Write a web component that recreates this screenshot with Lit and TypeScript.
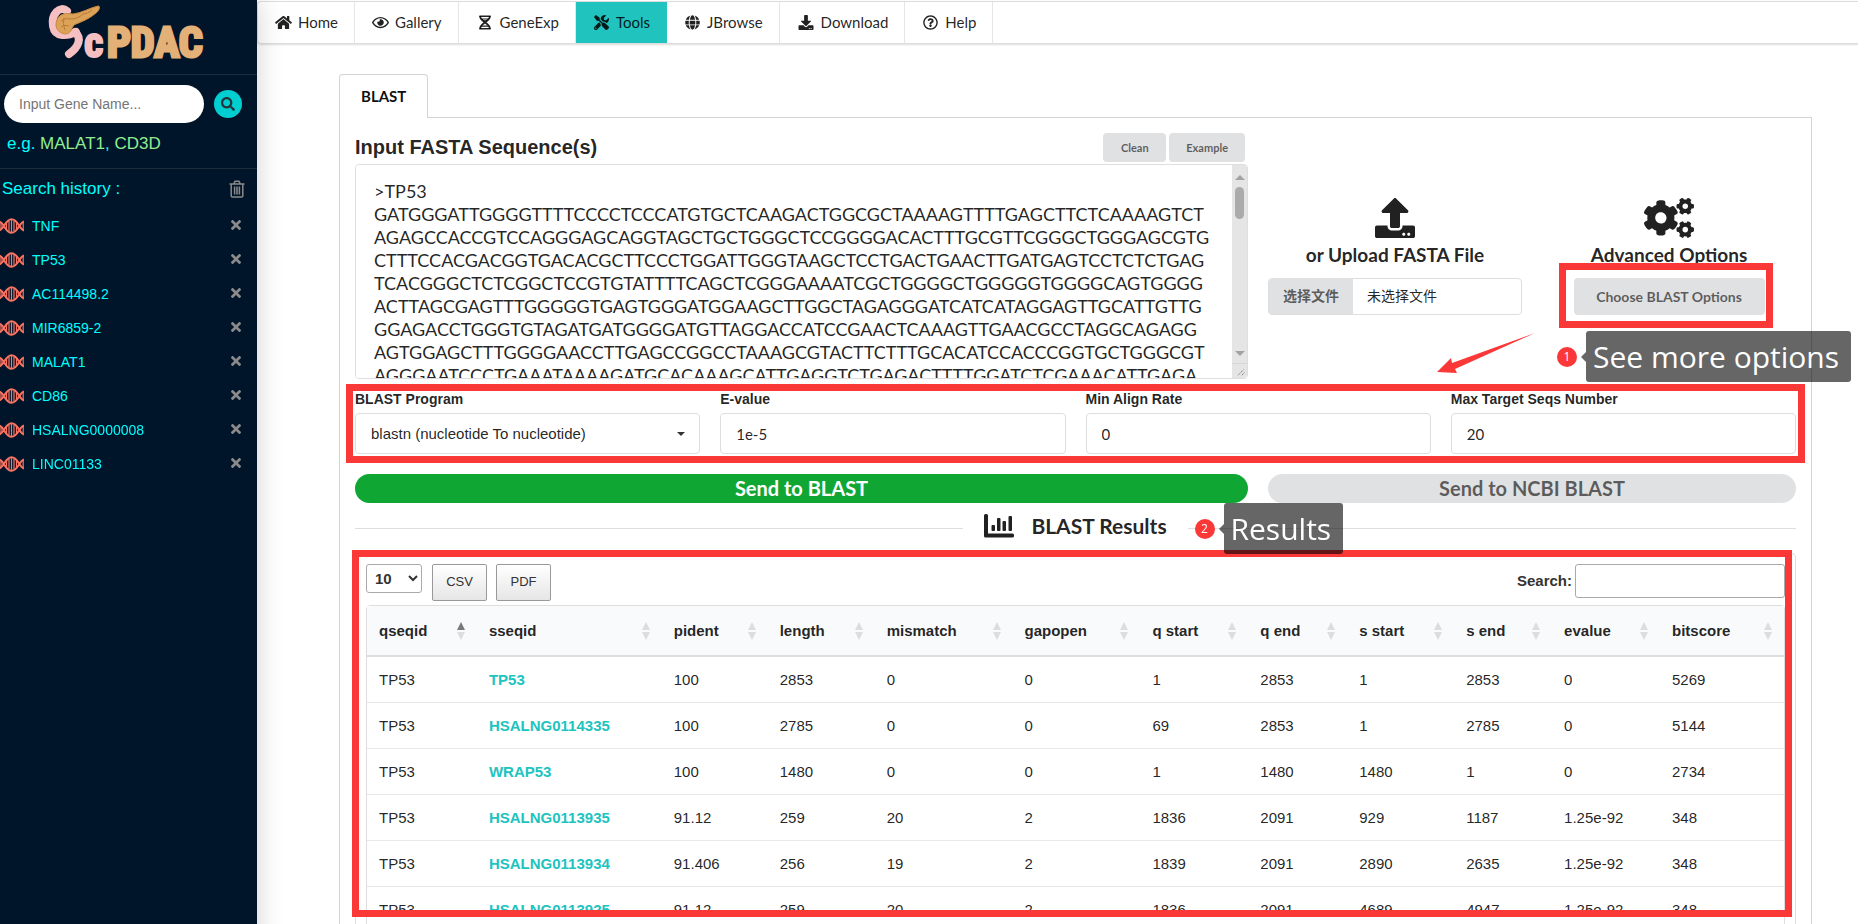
import { LitElement, html, css, svg } from "lit";
import { customElement, property } from "lit/decorators.js";

/* ---------- icons ---------- */
const smallCog =
  "M512.1 191l-8.2 14.3c-3 5.3-9.4 7.5-15.1 5.4-11.8-4.4-22.6-10.7-32.1-18.6-4.6-3.8-5.8-10.5-2.8-15.7l8.2-14.3c-6.9-8-12.3-17.3-15.9-27.4h-16.5c-6 0-11.2-4.3-12.2-10.3-2-12-2.1-24.6 0-37.1 1-6 6.2-10.4 12.2-10.4h16.5c3.6-10.1 9-19.4 15.9-27.4l-8.2-14.3c-3-5.2-1.9-11.9 2.8-15.7 9.5-7.9 20.4-14.2 32.1-18.6 5.7-2.1 12.1.1 15.1 5.4l8.2 14.3c10.5-1.9 21.2-1.9 31.7 0L552 6.3c3-5.3 9.4-7.5 15.1-5.4 11.8 4.4 22.6 10.7 32.1 18.6 4.6 3.8 5.8 10.5 2.8 15.7l-8.2 14.3c6.9 8 12.3 17.3 15.9 27.4h16.5c6 0 11.2 4.3 12.2 10.3 2 12 2.1 24.6 0 37.1-1 6-6.2 10.4-12.2 10.4h-16.5c-3.6 10.1-9 19.4-15.9 27.4l8.2 14.3c3 5.2 1.9 11.9-2.8 15.7-9.5 7.9-20.4 14.2-32.1 18.6-5.7 2.1-12.1-.1-15.1-5.4l-8.2-14.3c-10.4 1.9-21.2 1.9-31.7 0zm-10.5-58.8c38.5 29.6 82.4-14.3 52.8-52.8-38.5-29.7-82.4 14.3-52.8 52.8z";
const bigCog =
  "M386.3 286.1l33.7 16.8c10.1 5.8 14.5 18.1 10.5 29.1-8.9 24.2-26.4 46.4-42.6 65.8-7.4 8.9-20.2 11.1-30.3 5.3l-29.1-16.8c-16 13.7-34.6 24.6-54.9 31.7v33.6c0 11.6-8.3 21.6-19.7 23.6-24.6 4.2-50.4 4.4-75.9 0-11.5-2-20-11.9-20-23.6V418c-20.3-7.2-38.9-18-54.9-31.7L74 403c-10 5.8-22.9 3.6-30.3-5.3-16.2-19.4-33.3-41.6-42.2-65.7-4-10.9.4-23.2 10.5-29.1l33.3-16.8c-3.9-20.9-3.9-42.4 0-63.4L12 205.8c-10.1-5.8-14.6-18.1-10.5-29 8.9-24.2 26-46.4 42.2-65.8 7.4-8.9 20.2-11.1 30.3-5.3l29.1 16.8c16-13.7 34.6-24.6 54.9-31.7V57.1c0-11.5 8.2-21.5 19.6-23.5 24.6-4.2 50.5-4.4 76-.1 11.5 2 20 11.9 20 23.6v33.6c20.3 7.2 38.9 18 54.9 31.7l29.1-16.8c10-5.8 22.9-3.6 30.3 5.3 16.2 19.4 33.2 41.6 42.1 65.8 4 10.9.1 23.2-10 29.1l-33.7 16.8c3.9 21 3.9 42.5 0 63.5zm-117.6 21.1c59.2-77-28.7-164.9-105.7-105.7-59.2 77 28.7 164.9 105.7 105.7z";

const icons: Record<string, { box: string; body: unknown }> = {
  home: {
    box: "0 0 576 512",
    body: svg`<path d="M280.37 148.26L96 300.11V464a16 16 0 0 0 16 16l112.06-.29a16 16 0 0 0 15.92-16V368a16 16 0 0 1 16-16h64a16 16 0 0 1 16 16v95.64a16 16 0 0 0 16 16.05L464 480a16 16 0 0 0 16-16V300L295.67 148.26a12.19 12.19 0 0 0-15.3 0zM571.6 251.47L488 182.56V44.05a12 12 0 0 0-12-12h-56a12 12 0 0 0-12 12v72.61L318.47 43a48 48 0 0 0-61 0L4.34 251.47a12 12 0 0 0-1.6 16.9l25.5 31A12 12 0 0 0 45.15 301l235.22-193.74a12.19 12.19 0 0 1 15.3 0L530.9 301a12 12 0 0 0 16.9-1.6l25.5-31a12 12 0 0 0-1.7-16.93z"/>`,
  },
  eye: {
    box: "0 0 576 512",
    body: svg`<path d="M288 144a110.94 110.94 0 0 0-31.24 5 55.4 55.4 0 0 1 7.24 27 56 56 0 0 1-56 56 55.4 55.4 0 0 1-27-7.24A111.71 111.71 0 1 0 288 144zm284.52 97.4C518.29 135.59 410.93 64 288 64S57.68 135.64 3.48 241.41a32.35 32.35 0 0 0 0 29.19C57.71 376.41 165.07 448 288 448s230.32-71.64 284.52-177.41a32.35 32.35 0 0 0 0-29.19zM288 400c-98.65 0-189.09-55-237.93-144C98.91 167 189.34 112 288 112s189.09 55 237.93 144C477.1 345 386.66 400 288 400z"/>`,
  },
  gene: {
    box: "0 0 14 16",
    body: svg`<path d="M2 1V2.500C2 6 12 9.500 12 13.500V15M12 1V2.500C12 6 2 9.500 2 13.500V15" fill="none" stroke="currentColor" stroke-width="2"/><path d="M1 .5h12v1.600H1zM1 13.900h12v1.600H1zM3 3.600h8v1.200H3zM3 11.300h8v1.200H3zM5 5.600h4v1H5z"/>`,
  },
  tools: {
    box: "0 0 512 512",
    body: svg`<path d="M501.1 395.7L384 278.600c-23.1-23.1-57.6-27.6-85.4-13.9L192 158.100V96L64 0 0 64l96 128h62.100l106.600 106.600c-13.6 27.800-9.200 62.300 13.900 85.400l117.100 117.100c14.600 14.600 38.200 14.600 52.700 0l52.700-52.700c14.500-14.600 14.500-38.200 0-52.700zM331.700 225c28.300 0 54.900 11 74.900 31l19.400 19.400c15.800-6.900 30.800-16.500 43.800-29.500 37.100-37.100 49.700-89.300 37.900-136.700-2.200-9-13.500-12.100-20.100-5.500l-74.400 74.400-67.900-11.300L334 98.900l74.400-74.400c6.600-6.600 3.400-17.900-5.700-20.200-47.400-11.700-99.600.9-136.600 37.900-28.500 28.500-41.900 66.100-41.200 103.600l82.100 82.100c8.100-1.900 16.500-2.900 24.700-2.900zm-103.900 82l-56.700-56.700L18.700 402.800c-25 25-25 65.500 0 90.500s65.500 25 90.500 0l123.600-123.600c-7.600-19.900-9.900-41.600-5-62.700zM64 472c-13.200 0-24-10.800-24-24 0-13.300 10.700-24 24-24s24 10.700 24 24c0 13.200-10.700 24-24 24z"/>`,
  },
  globe: {
    box: "0 0 496 512",
    body: svg`<path d="M336.500 160C322 70.700 287.800 8 248 8s-74 62.700-88.500 152h177zM152 256c0 22.200 1.200 43.500 3.300 64h185.300c2.100-20.500 3.300-41.800 3.300-64s-1.200-43.500-3.300-64H155.300c-2.100 20.500-3.300 41.800-3.300 64zm324.700-96c-28.600-67.900-86.500-120.400-158-141.600 24.400 33.800 41.200 84.700 50 141.600h108zM177.200 18.400C105.800 39.600 47.800 92.100 19.300 160h108c8.700-56.900 25.500-107.800 49.900-141.600zM487.400 192H372.700c2.100 21 3.300 42.500 3.300 64s-1.200 43-3.300 64h114.600c5.500-20.500 8.600-41.800 8.600-64s-3.100-43.500-8.500-64zM120 256c0-21.500 1.200-43 3.300-64H8.600C3.200 212.500 0 233.800 0 256s3.200 43.500 8.600 64h114.600c-2-21-3.200-42.500-3.200-64zm39.500 96c14.500 89.300 48.700 152 88.500 152s74-62.700 88.500-152h-177zm159.300 141.600c71.400-21.200 129.400-73.700 158-141.600h-108c-8.800 56.900-25.600 107.800-50 141.600zM19.300 352c28.600 67.900 86.500 120.400 158 141.600-24.400-33.800-41.200-84.700-50-141.600h-108z"/>`,
  },
  download: {
    box: "0 0 512 512",
    body: svg`<path d="M216 0h80c13.300 0 24 10.700 24 24v168h87.700c17.800 0 26.700 21.500 14.100 34.100L269.700 378.300c-7.500 7.500-19.800 7.500-27.300 0L90.100 226.100c-12.600-12.600-3.700-34.100 14.100-34.100H192V24c0-13.300 10.700-24 24-24zm296 376v112c0 13.300-10.700 24-24 24H24c-13.300 0-24-10.700-24-24V376c0-13.300 10.700-24 24-24h146.700l49 49c20.100 20.100 52.500 20.100 72.600 0l49-49H488c13.300 0 24 10.700 24 24zm-124 88c0-11-9-20-20-20s-20 9-20 20 9 20 20 20 20-9 20-20zm64 0c0-11-9-20-20-20s-20 9-20 20 9 20 20 20 20-9 20-20z"/>`,
  },
  help: {
    box: "0 0 512 512",
    body: svg`<path d="M256 8C119.043 8 8 119.083 8 256c0 136.997 111.043 248 248 248s248-111.003 248-248C504 119.083 392.957 8 256 8zm0 448c-110.532 0-200-89.431-200-200 0-110.495 89.472-200 200-200 110.491 0 200 89.471 200 200 0 110.53-89.431 200-200 200zm107.244-255.2c0 67.052-72.421 68.084-72.421 92.863V300c0 6.627-5.373 12-12 12h-45.647c-6.627 0-12-5.373-12-12v-8.659c0-35.745 27.1-50.034 47.579-61.516 17.561-9.845 28.324-16.541 28.324-29.579 0-17.246-21.999-28.693-39.784-28.693-23.189 0-33.894 10.977-48.942 29.969-4.057 5.12-11.46 6.071-16.666 2.124l-27.824-21.098c-5.107-3.872-6.251-11.066-2.644-16.363C184.846 131.491 214.94 112 261.794 112c49.071 0 101.45 38.304 101.45 88.8zM298 368c0 23.159-18.841 42-42 42s-42-18.841-42-42 18.841-42 42-42 42 18.841 42 42z"/>`,
  },
  search: {
    box: "0 0 512 512",
    body: svg`<path d="M505 442.700L405.300 343c-4.500-4.500-10.600-7-17-7H372c27.600-35.300 44-79.700 44-128C416 93.100 322.900 0 208 0S0 93.100 0 208s93.100 208 208 208c48.300 0 92.700-16.400 128-44v16.300c0 6.400 2.500 12.500 7 17l99.700 99.700c9.400 9.400 24.600 9.400 33.900 0l28.300-28.300c9.400-9.400 9.400-24.600.1-34zM208 336c-70.700 0-128-57.200-128-128 0-70.700 57.200-128 128-128 70.700 0 128 57.200 128 128 0 70.700-57.200 128-128 128z"/>`,
  },
  close: {
    box: "0 80 352 352",
    body: svg`<path d="M242.720 256l100.070-100.070c12.280-12.280 12.280-32.190 0-44.480l-22.240-22.240c-12.280-12.280-32.190-12.280-44.480 0L176 189.280 75.930 89.210c-12.280-12.280-32.190-12.280-44.480 0L9.210 111.450c-12.280 12.280-12.280 32.190 0 44.480L109.280 256 9.210 356.070c-12.280 12.280-12.280 32.190 0 44.480l22.240 22.240c12.280 12.280 32.200 12.280 44.480 0L176 322.720l100.070 100.070c12.280 12.280 32.200 12.280 44.480 0l22.240-22.240c12.280-12.280 12.280-32.190 0-44.480L242.720 256z"/>`,
  },
  trash: {
    box: "0 0 16 18",
    body: svg`<path d="M.5 4h15M2.200 4.500V15.700a1.300 1.300 0 0 0 1.300 1.300h9a1.300 1.300 0 0 0 1.300-1.300V4.500M5 3.600 6 1.200h4l1 2.400M5.600 6.500v8M8 6.500v8M10.400 6.500v8" fill="none" stroke="currentColor" stroke-width="1.500"/>`,
  },
  dna: {
    box: "0 0 24 16",
    body: svg`<path d="M-1 3.500C4 4 5 14.800 11.500 14.800S19 5 24 3.500M-1 12.500C4 12 5 1.200 11.500 1.200S19 11 24 12.500" fill="none" stroke="currentColor" stroke-width="2"/><path d="M9 3v10M11.500 1.500v13M14 3v10M6.500 5v6M16.500 5v6M1 4v8M23.200 3.500v9" fill="none" stroke="currentColor" stroke-width="1.200"/>`,
  },
  upload: {
    box: "0 0 512 512",
    body: svg`<path d="M296 384h-80c-13.300 0-24-10.700-24-24V192h-87.700c-17.800 0-26.700-21.500-14.100-34.100L242.300 5.700c7.500-7.500 19.800-7.500 27.300 0l152.200 152.200c12.600 12.600 3.700 34.100-14.100 34.100H320v168c0 13.300-10.700 24-24 24zm216-8v112c0 13.300-10.700 24-24 24H24c-13.300 0-24-10.700-24-24V376c0-13.300 10.700-24 24-24h136v8c0 30.900 25.100 56 56 56h80c30.900 0 56-25.100 56-56v-8h136c13.300 0 24 10.700 24 24zm-124 88c0-11-9-20-20-20s-20 9-20 20 9 20 20 20 20-9 20-20zm64 0c0-11-9-20-20-20s-20 9-20 20 9 20 20 20 20-9 20-20z"/>`,
  },
  cogs: {
    box: "0 0 640 512",
    body: svg`<path d=${bigCog}/><path d=${smallCog}/><path d=${smallCog} transform="translate(0 299)"/>`,
  },
  chart: {
    box: "0 0 30 24",
    body: svg`<path d="M0 1.500A1.500 1.500 0 0 1 1.500 0h1A1.500 1.500 0 0 1 4 1.500V19.500H28.500A1.500 1.500 0 0 1 30 21v1a1.500 1.500 0 0 1-1.500 1.500H1.500A1.500 1.500 0 0 1 0 22z"/><rect x="7.500" y="11" width="3.500" height="6" rx="1"/><rect x="13" y="4" width="3.500" height="13" rx="1"/><rect x="18.500" y="7" width="3.500" height="10" rx="1"/><rect x="24.500" y="2" width="3.500" height="15" rx="1"/>`,
  },
};

const icon = (name: string) =>
  html`<svg class="icon ${name}" viewBox=${icons[name].box} aria-hidden="true">${icons[name].body}</svg>`;

/* ---------- sidebar ---------- */
@customElement("gene-sidebar")
class GeneSidebar extends LitElement {
  static styles = css`
    :host {
      display: flex;
      flex-direction: column;
      box-sizing: border-box;
      background: #001529;
      color: #0ff;
      font-family: "Liberation Sans", Arial, sans-serif;
      box-shadow: 2px 0 24px rgba(0, 0, 0, 0.16);
      z-index: 2;
    }
    .icon {
      fill: currentColor;
      display: block;
    }
    .brand {
      display: flex;
      justify-content: center;
      border-bottom: 1px solid #1c2c3c;
      box-sizing: border-box;
      height: 75px;
    }
    .brand svg {
      width: 164px;
      height: 66px;
      overflow: visible;
    }
    .brand text {
      font-family: "Liberation Sans Narrow", "Roboto Condensed", "Liberation Sans", sans-serif;
      font-weight: 700;
    }
    .finder {
      display: grid;
      grid-template-columns: 1fr 28px;
      gap: 10px;
      align-items: center;
      padding: 10px 15px 0 4px;
    }
    .finder input {
      width: 100%;
      height: 38px;
      box-sizing: border-box;
      border: 0;
      border-radius: 19px;
      padding: 0 15px;
      background: #fff;
      font: 14px "Liberation Sans", Arial, sans-serif;
    }
    .finder input::placeholder {
      color: #757575;
    }
    .finder button {
      width: 28px;
      height: 28px;
      border: 0;
      border-radius: 50%;
      background: #00ced1;
      color: #26343a;
      padding: 7px;
      cursor: pointer;
    }
    .finder .icon {
      width: 14px;
      height: 14px;
    }
    .sample {
      margin: 0;
      padding: 11px 7px 14px;
      font-size: 17px;
      line-height: 20px;
      border-bottom: 1px solid #1c2c3c;
    }
    .sample a {
      color: #90ee90;
      text-decoration: none;
    }
    .head {
      display: flex;
      justify-content: space-between;
      align-items: center;
      padding: 8px 12px 0 2px;
      height: 24px;
    }
    .head h2 {
      margin: 0;
      font-size: 17px;
      line-height: 24px;
      font-weight: 400;
    }
    button.plain {
      border: 0;
      padding: 0;
      background: none;
      color: #8a8a8a;
      cursor: pointer;
    }
    .trash {
      width: 16px;
      height: 18px;
    }
    ul {
      list-style: none;
      margin: 8px 0 0;
      padding: 0;
    }
    li {
      height: 34px;
      display: flex;
      align-items: center;
      gap: 8px;
      padding-right: 16px;
      font-size: 14px;
    }
    li a {
      flex: 1;
      color: #0ff;
      text-decoration: none;
    }
    .dna {
      width: 24px;
      height: 16px;
      color: #fa7260;
    }
    .close {
      width: 10px;
      height: 10px;
      margin-bottom: 2px;
    }
  `;
  @property({ attribute: false }) genes: string[] = [];

  render() {
    return html`
      <div class="brand">
        <svg viewBox="0 0 164 66" role="img" aria-label="ScPDAC">
          <path d="M20 11C13 5 4 14 6 26C8 38 21 36 29 32" fill="none" stroke="#f6c0c2" stroke-width="8" stroke-linecap="round" />
          <path d="M28 32C35 38 32 47 22 54" fill="none" stroke="#f6c0c2" stroke-width="8" stroke-linecap="round" />
          <path
            d="M10 20C12 13 21 13 26 14C35 13 42 8 51 6C54 6 52 11 49 13C42 19 34 22 29 24C24 25 26 34 18 34C11 33 7 27 10 20Z"
            fill="#dca257" stroke="#c98a3f" stroke-width="1"
          />
          <path d="M14 21q5-4 9-2q8 0 13-5q5 0 9-4M14 27q4-3 8-1M17 18q-2 5 1 12" fill="none" stroke="#b97b3a" stroke-width="1" />
          <text x="37" y="57" font-size="42" fill="#f6c0c2" stroke="#f6c0c2" stroke-width="2">c</text>
          <text x="60" y="57" font-size="42" fill="#e3b078" stroke="#e3b078" stroke-width="3">PDAC</text>
        </svg>
      </div>
      <div class="finder">
        <input type="text" placeholder="Input Gene Name..." aria-label="Input Gene Name" />
        <button aria-label="Search">${icon("search")}</button>
      </div>
      <p class="sample">e.g. <a href="#malat1">MALAT1</a>, <a href="#cd3d">CD3D</a></p>
      <div class="head">
        <h2>Search history :</h2>
        <button class="plain" aria-label="Clear history">${icon("trash")}</button>
      </div>
      <ul>
        ${this.genes.map(
          (g) => html`<li>
            ${icon("dna")}<a href="#${g}">${g}</a>
            <button class="plain" aria-label="Remove ${g}">${icon("close")}</button>
          </li>`
        )}
      </ul>
    `;
  }
}

/* ---------- numbered callout ---------- */
@customElement("step-note")
class StepNote extends LitElement {
  static styles = css`
    :host {
      display: flex;
      align-items: center;
      gap: 9px;
      font-family: "Open Sans", "Noto Sans", sans-serif;
      color: #fff;
      white-space: nowrap;
    }
    .dot {
      width: 20px;
      height: 20px;
      border-radius: 50%;
      background: #fb3838;
      font-size: 12px;
      line-height: 20px;
      text-align: center;
    }
    .bubble {
      position: relative;
      background: rgba(0, 0, 0, 0.6);
      border-radius: 3px;
      padding: 0 12px 0 7px;
      font-size: 30px;
      line-height: 51px;
    }
    .bubble::before {
      content: "";
      position: absolute;
      left: -5px;
      top: 21px;
      border: 5px solid transparent;
      border-left: 0;
      border-right-color: rgba(0, 0, 0, 0.6);
    }
  `;
  @property() step = "";
  @property() text = "";
  render() {
    return html`<span class="dot">${this.step}</span><span class="bubble">${this.text}</span>`;
  }
}

/* ---------- page ---------- */
const nav: [string, string][] = [
  ["home", "Home"],
  ["eye", "Gallery"],
  ["gene", "GeneExp"],
  ["tools", "Tools"],
  ["globe", "JBrowse"],
  ["download", "Download"],
  ["help", "Help"],
];

const sequence = [
  "GATGGGATTGGGGTTTTCCCCTCCCATGTGCTCAAGACTGGCGCTAAAAGTTTTGAGCTTCTCAAAAGTCT",
  "AGAGCCACCGTCCAGGGAGCAGGTAGCTGCTGGGCTCCGGGGACACTTTGCGTTCGGGCTGGGAGCGTG",
  "CTTTCCACGACGGTGACACGCTTCCCTGGATTGGGTAAGCTCCTGACTGAACTTGATGAGTCCTCTCTGAG",
  "TCACGGGCTCTCGGCTCCGTGTATTTTCAGCTCGGGAAAATCGCTGGGGCTGGGGGTGGGGCAGTGGGG",
  "ACTTAGCGAGTTTGGGGGTGAGTGGGATGGAAGCTTGGCTAGAGGGATCATCATAGGAGTTGCATTGTTG",
  "GGAGACCTGGGTGTAGATGATGGGGATGTTAGGACCATCCGAACTCAAAGTTGAACGCCTAGGCAGAGG",
  "AGTGGAGCTTTGGGGAACCTTGAGCCGGCCTAAAGCGTACTTCTTTGCACATCCACCCGGTGCTGGGCGT",
  "AGGGAATCCCTGAAATAAAAGATGCACAAAGCATTGAGGTCTGAGACTTTTGGATCTCGAAACATTGAGA",
];
const fasta = [">TP53", ...Array.from({ length: 5 }, () => sequence).flat()].join("\n");

const columns: [string, number][] = [
  ["qseqid", 110],
  ["sseqid", 185],
  ["pident", 106],
  ["length", 107],
  ["mismatch", 138],
  ["gapopen", 128],
  ["q start", 108],
  ["q end", 99],
  ["s start", 107],
  ["s end", 98],
  ["evalue", 108],
  ["bitscore", 124],
];
const total = columns.reduce((sum, [, w]) => sum + w, 0);

const rows = [
  ["TP53", "TP53", "100", "2853", "0", "0", "1", "2853", "1", "2853", "0", "5269"],
  ["TP53", "HSALNG0114335", "100", "2785", "0", "0", "69", "2853", "1", "2785", "0", "5144"],
  ["TP53", "WRAP53", "100", "1480", "0", "0", "1", "1480", "1480", "1", "0", "2734"],
  ["TP53", "HSALNG0113935", "91.12", "259", "20", "2", "1836", "2091", "929", "1187", "1.25e-92", "348"],
  ["TP53", "HSALNG0113934", "91.406", "256", "19", "2", "1839", "2091", "2890", "2635", "1.25e-92", "348"],
  ["TP53", "HSALNG0113925", "91.12", "259", "20", "2", "1836", "2091", "4689", "4947", "1.25e-92", "348"],
];

@customElement("app-root")
class AppRoot extends LitElement {
  static styles = css`
    :host {
      display: grid;
      grid-template-columns: 257px minmax(0, 1fr);
      height: 100vh;
      overflow: hidden;
      background: #fff;
      color: rgba(0, 0, 0, 0.87);
      font-family: Lato, sans-serif;
      font-size: 14px;
    }
    .icon {
      fill: currentColor;
      display: block;
    }
    main {
      min-width: 0;
    }
    nav {
      display: flex;
      box-sizing: border-box;
      height: 43px;
      margin-top: 1px;
      border: 1px solid #dcdddd;
      border-right: 0;
      border-radius: 4px 0 0 4px;
      box-shadow: 0 1px 2px rgba(34, 36, 38, 0.15);
    }
    nav a {
      display: flex;
      align-items: center;
      gap: 6px;
      padding: 0 16px 1px 17px;
      font-size: 15px;
      color: rgba(0, 0, 0, 0.87);
      text-decoration: none;
      border-right: 1px solid #e6e6e7;
    }
    nav a.active {
      background: #21c3bf;
      border-color: #21c3bf;
    }
    nav .icon {
      height: 15px;
      width: 17px;
    }
    nav .gene {
      width: 18px;
    }
    nav .download {
      width: 18px;
    }
    .page {
      padding: 30px 46px 0 82px;
    }
    .tab {
      display: inline-block;
      box-sizing: border-box;
      height: 44px;
      padding: 0 21px;
      margin-bottom: -1px;
      position: relative;
      border: 1px solid #d4d4d5;
      border-bottom: 0;
      border-radius: 4px 4px 0 0;
      background: #fff;
      font: bold 15px/42px Lato, sans-serif;
      color: rgba(0, 0, 0, 0.95);
      vertical-align: top;
    }
    .panel {
      border: 1px solid #d4d4d5;
      border-bottom: 0;
      padding: 15px 15px 0;
    }
    .split {
      display: grid;
      grid-template-columns: minmax(0, 893fr) minmax(0, 528fr);
      column-gap: 20px;
    }
    .bar {
      display: flex;
      align-items: center;
      gap: 3px;
      padding-right: 3px;
      margin-bottom: 2px;
    }
    .bar label {
      flex: 1;
      font: bold 20px/29px "Liberation Sans", Arial, sans-serif;
    }
    .grey {
      border: 0;
      border-radius: 4px;
      background: #e0e1e2;
      color: rgba(0, 0, 0, 0.6);
      font-family: Lato, sans-serif;
      font-weight: 700;
      cursor: pointer;
    }
    .bar .grey {
      height: 29px;
      padding: 0 17px;
      font-size: 11px;
      min-width: 63px;
    }
    .sequence {
      position: relative;
    }
    textarea {
      display: block;
      width: 100%;
      height: 215px;
      box-sizing: border-box;
      border: 1px solid #dededf;
      border-radius: 4px;
      padding: 15px 18px;
      font: 18px/23px Lato, sans-serif;
      color: rgba(0, 0, 0, 0.87);
      resize: none;
      white-space: pre;
      overflow-x: hidden;
      scrollbar-width: none;
      outline: 0;
    }
    .scroll {
      position: absolute;
      top: 1px;
      right: 1px;
      bottom: 1px;
      width: 15px;
      display: flex;
      flex-direction: column;
      align-items: center;
      background: #e5e5e5;
      border-radius: 0 3px 3px 0;
      pointer-events: none;
    }
    .scroll svg {
      display: block;
      flex: none;
      fill: #a3a3a3;
    }
    .arrow {
      width: 10px;
      height: 5px;
      margin: 10px 0 7px;
    }
    .thumb {
      flex: none;
      width: 9px;
      height: 32px;
      margin-bottom: auto;
      border-radius: 5px;
      background: #ababab;
    }
    .scroll .grip {
      box-sizing: border-box;
      width: 15px;
      height: 15px;
      border-top: 1px solid #d6d6d6;
      fill: none;
      stroke: #666;
    }
    .extras {
      display: grid;
      grid-template-columns: 1fr 1fr;
      gap: 20px;
      align-items: start;
      padding-top: 65px;
    }
    .extra {
      display: flex;
      flex-direction: column;
      align-items: center;
      position: relative;
    }
    .extra h3 {
      margin: 5px 0 11px;
      font-size: 19px;
      line-height: 24px;
      font-weight: 700;
    }
    .extra .icon {
      height: 40px;
      width: 50px;
    }
    .file {
      display: flex;
      width: 100%;
      height: 37px;
      box-sizing: border-box;
      border: 1px solid #dededf;
      border-radius: 4px;
      overflow: hidden;
      position: relative;
      font: 14px/33px "Noto Sans CJK SC", sans-serif;
    }
    .file input {
      position: absolute;
      inset: 0;
      opacity: 0;
    }
    .file label {
      width: 84px;
      background: #e0e1e2;
      color: rgba(0, 0, 0, 0.6);
      font-weight: 700;
      text-align: center;
    }
    .file span {
      padding-left: 14px;
    }
    .choose {
      width: 191px;
      height: 37px;
      font-size: 14px;
    }
    .mark {
      position: absolute;
      border: 7px solid #fb3838;
      pointer-events: none;
      z-index: 1;
    }
    .mark.options {
      width: 200px;
      height: 51px;
      left: 50%;
      margin-left: -110px;
      top: 65px;
    }
    .extra step-note {
      position: absolute;
      left: 15px;
      top: 133px;
      z-index: 2;
    }
    .pointer {
      position: absolute;
      width: 98px;
      height: 42px;
      right: -13px;
      top: 134px;
      fill: #fb3838;
    }
    .fields {
      display: grid;
      grid-template-columns: repeat(4, minmax(0, 1fr));
      gap: 20px;
      margin-top: 12px;
      position: relative;
    }
    .mark.params {
      inset: -7px -9px -9px;
    }
    .field label {
      display: block;
      margin-bottom: 5px;
      font: bold 14px/17px "Liberation Sans", Arial, sans-serif;
    }
    .field input,
    .field select {
      width: 100%;
      height: 41px;
      box-sizing: border-box;
      border: 1px solid #dededf;
      border-radius: 4px;
      padding: 0 15px;
      background: #fff;
      color: rgba(0, 0, 0, 0.87);
      font: 15px Lato, sans-serif;
      display: block;
    }
    .field select {
      appearance: none;
      font: 15px "Liberation Sans", Arial, sans-serif;
      background: #fff
        url("data:image/svg+xml,%3Csvg xmlns='http://www.w3.org/2000/svg' width='8' height='4'%3E%3Cpath d='M0 0L4 4L8 0z' fill='%23333'/%3E%3C/svg%3E")
        no-repeat right 14px center;
    }
    .send {
      margin-top: 20px;
    }
    .send button {
      height: 29px;
      border-radius: 15px;
      font-size: 20px;
      line-height: 26px;
      padding: 0 0 2px;
    }
    .send .go {
      border: 0;
      background: #10a633;
      color: #fff;
      font-family: Lato, sans-serif;
      font-weight: 700;
      cursor: pointer;
    }
    .divider {
      display: flex;
      align-items: center;
      height: 50px;
      position: relative;
    }
    .divider::before,
    .divider::after {
      content: "";
      flex: 1;
      border-top: 1px solid #dededf;
    }
    .divider h2 {
      display: flex;
      align-items: center;
      gap: 17px;
      margin: 0;
      padding: 0 21px 4px;
      font-size: 21px;
      line-height: 24px;
    }
    .divider .icon {
      width: 30px;
      height: 24px;
    }
    .divider step-note {
      position: absolute;
      left: calc(50% + 119px);
      top: 0;
      z-index: 2;
    }
    .segment {
      position: relative;
      border: 1px solid #dededf;
      border-radius: 4px;
      padding: 10px 10px 20px;
      font-family: "Liberation Sans", Arial, sans-serif;
    }
    .mark.results {
      left: -4px;
      right: 3px;
      top: -4px;
      height: 353px;
    }
    .controls {
      display: flex;
      align-items: flex-start;
      margin-bottom: 4px;
      height: 37px;
    }
    .controls select {
      width: 56px;
      height: 29px;
      border: 1px solid #aaa;
      border-radius: 3px;
      background: #fff;
      padding: 0 4px;
      font: bold 15px "Liberation Sans", Arial, sans-serif;
      color: #333;
      margin-right: 10px;
    }
    .controls button {
      width: 55px;
      height: 37px;
      margin-right: 9px;
      border: 1px solid #999;
      border-radius: 2px;
      background: linear-gradient(#fff, #e6e6e6);
      padding: 0 0 2px;
      font: 13px "Liberation Sans", Arial, sans-serif;
      color: #333;
      cursor: pointer;
    }
    .controls label {
      margin-left: auto;
      font-size: 15px;
      line-height: 34px;
      font-weight: 700;
      color: #333;
      padding-right: 3px;
    }
    .controls input {
      width: 210px;
      height: 34px;
      box-sizing: border-box;
      border: 1px solid #aaa;
      border-radius: 3px;
      background: #fff;
      padding: 5px;
    }
    table {
      width: 100%;
      table-layout: fixed;
      border-collapse: separate;
      border-spacing: 0;
      border: 1px solid #dededf;
      border-radius: 4px;
      font-size: 15px;
    }
    th {
      background: #f9fafb;
      height: 49px;
      padding: 0 12px;
      text-align: left;
      border-bottom: 2px solid #dddede;
      color: rgba(0, 0, 0, 0.87);
    }
    .sort {
      display: flex;
      align-items: center;
      justify-content: space-between;
      white-space: nowrap;
    }
    .sort svg {
      width: 8px;
      height: 18px;
      flex: none;
      fill: #dcdddd;
    }
    .sort .on {
      fill: #7a7a7a;
    }
    td {
      height: 45px;
      padding: 0 12px;
      border-bottom: 1px solid #e8e8e9;
    }
    td a {
      color: #21c3bf;
      font-weight: 700;
      text-decoration: none;
    }
  `;

  render() {
    return html`
      <gene-sidebar
        .genes=${["TNF", "TP53", "AC114498.2", "MIR6859-2", "MALAT1", "CD86", "HSALNG0000008", "LINC01133"]}
      ></gene-sidebar>
      <main>
        <nav>
          ${nav.map(
            ([name, label]) =>
              html`<a href="#${name}" class=${name === "tools" ? "active" : ""}>${icon(name)}${label}</a>`
          )}
        </nav>
        <div class="page">
          <div class="tab">BLAST</div>
          <section class="panel">
            <div class="split">
              <div>
                <div class="bar">
                  <label for="fasta">Input FASTA Sequence(s)</label>
                  <button class="grey">Clean</button>
                  <button class="grey">Example</button>
                </div>
                <div class="sequence">
                  <textarea id="fasta" spellcheck="false" .value=${fasta}></textarea>
                  <div class="scroll" aria-hidden="true">
                    <svg class="arrow" viewBox="0 0 10 5"><path d="M0 5L5 0L10 5z" /></svg>
                    <div class="thumb"></div>
                    <svg class="arrow" viewBox="0 0 10 5"><path d="M0 0L5 5L10 0z" /></svg>
                    <svg class="grip" viewBox="0 0 15 15"><path d="M6 12L12 6M10 12L13 9" stroke-dasharray="1.500 1" /></svg>
                  </div>
                </div>
              </div>
              <div class="extras">
                <div class="extra">
                  ${icon("upload")}
                  <h3>or Upload FASTA File</h3>
                  <div class="file">
                    <input type="file" id="file" />
                    <label for="file">选择文件</label><span>未选择文件</span>
                  </div>
                  <svg class="pointer" viewBox="0 0 98 42"><path d="M98 1L15 31L14 26L0 40L20 41L18 37Z" /></svg>
                </div>
                <div class="extra">
                  ${icon("cogs")}
                  <h3>Advanced Options</h3>
                  <button class="grey choose">Choose BLAST Options</button>
                  <div class="mark options"></div>
                  <step-note step="1" text="See more options"></step-note>
                </div>
              </div>
            </div>
            <div class="fields">
              <div class="field">
                <label for="program">BLAST Program</label>
                <select id="program">
                  <option>blastn (nucleotide To nucleotide)</option>
                </select>
              </div>
              <div class="field"><label for="ev">E-value</label><input id="ev" type="text" value="1e-5" /></div>
              <div class="field"><label for="rate">Min Align Rate</label><input id="rate" type="text" value="0" /></div>
              <div class="field"><label for="max">Max Target Seqs Number</label><input id="max" type="text" value="20" /></div>
              <div class="mark params"></div>
            </div>
            <div class="split send">
              <button class="go">Send to BLAST</button>
              <button class="grey">Send to NCBI BLAST</button>
            </div>
            <div class="divider">
              <h2>${icon("chart")}BLAST Results</h2>
              <step-note step="2" text="Results"></step-note>
            </div>
            <div class="segment">
              <div class="mark results"></div>
              <div class="controls">
                <select aria-label="Rows per page">
                  <option>10</option>
                </select>
                <button>CSV</button>
                <button>PDF</button>
                <label for="filter">Search:</label>
                <input id="filter" type="search" />
              </div>
              <table>
                <colgroup>
                  ${columns.map(([, w]) => html`<col style="width:${(w / total) * 100}%" />`)}
                </colgroup>
                <thead>
                  <tr>
                    ${columns.map(
                      ([name], i) => html`<th>
                        <div class="sort">
                          ${name}
                          <svg viewBox="0 0 8 18">
                            <path class=${i === 0 ? "on" : ""} d="M4 0L8 8H0z" />
                            <path d="M0 10H8L4 18z" />
                          </svg>
                        </div>
                      </th>`
                    )}
                  </tr>
                </thead>
                <tbody>
                  ${rows.map(
                    (r) => html`<tr>
                      ${r.map((v, i) => html`<td>${i === 1 ? html`<a href="#${v}">${v}</a>` : v}</td>`)}
                    </tr>`
                  )}
                </tbody>
              </table>
            </div>
          </section>
        </div>
      </main>
    `;
  }
}
